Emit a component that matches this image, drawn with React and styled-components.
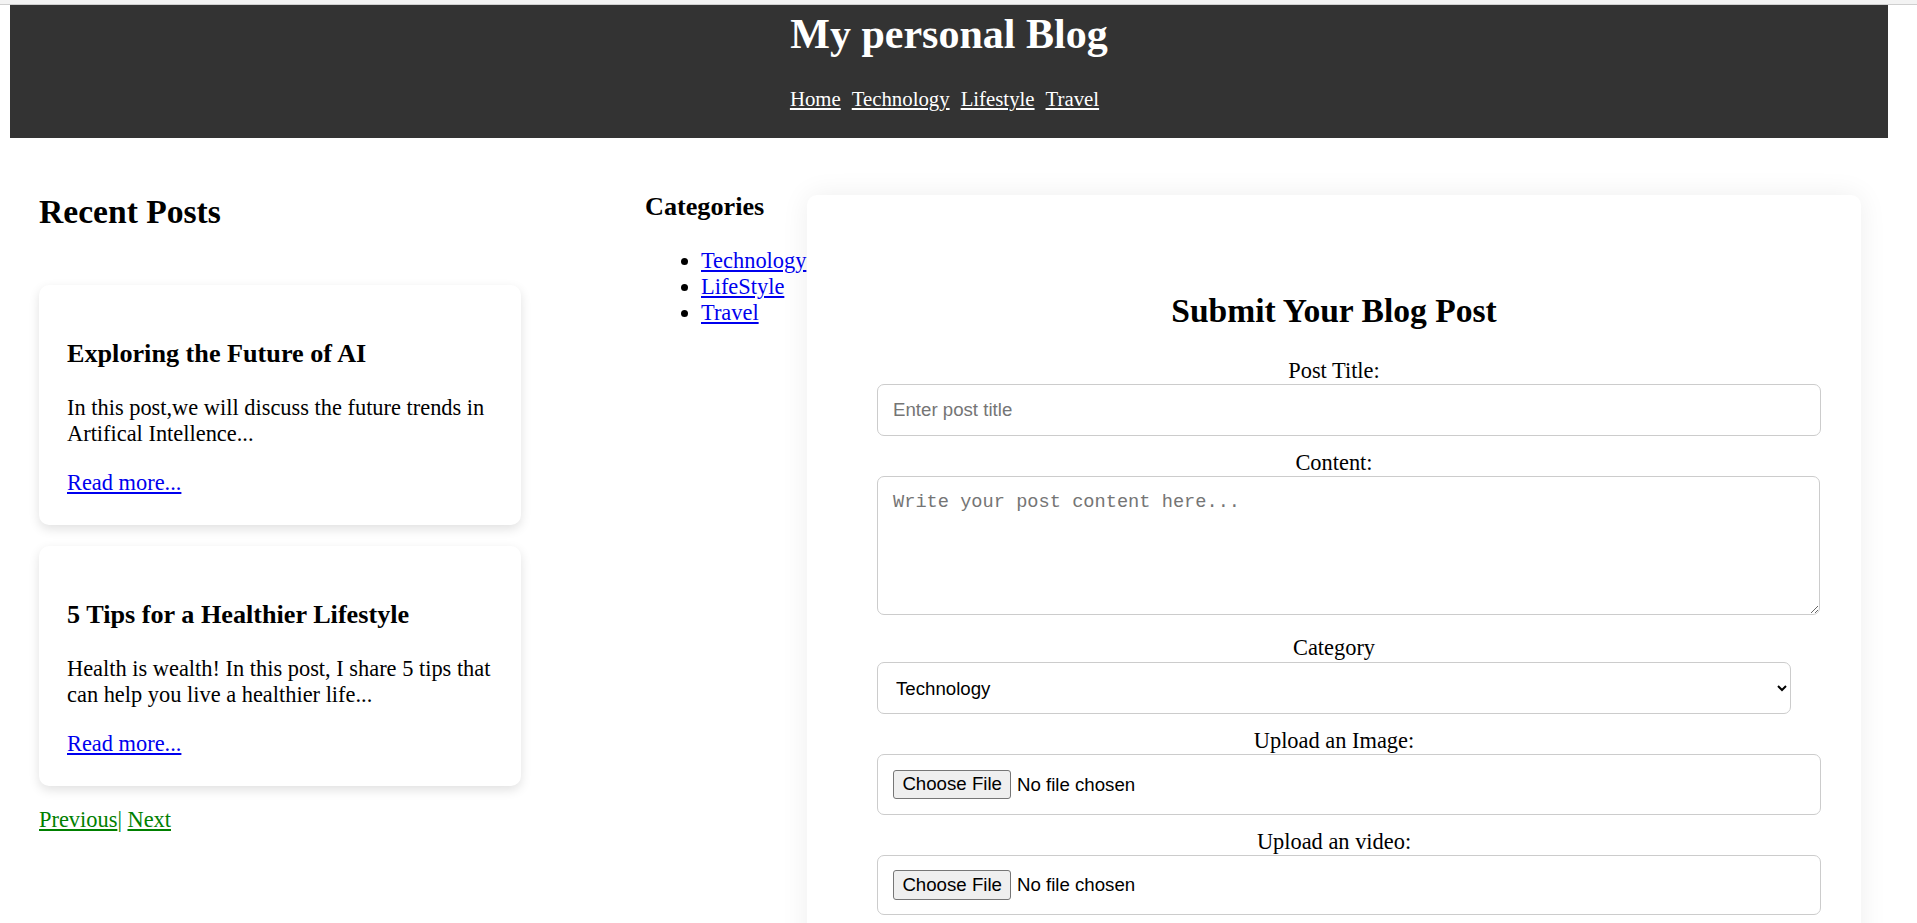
import React from 'react';
import styled, { createGlobalStyle } from 'styled-components';

const GlobalStyle = createGlobalStyle`
  html, body {
    margin: 0;
    padding: 0;
    background: #fff;
  }
  body {
    font-family: "Liberation Serif", "Times New Roman", serif;
    font-size: 22.4px;
    color: #000;
    border-top: 4px solid #f3f3f3;
  }
`;

/* right padding keeps room where the browser scrollbar sits in the reference */
const Page = styled.div`
  border-top: 1px solid #cfcfcf;
  padding: 0 29px 0 10px;
`;

const Header = styled.header`
  background-color: #333;
  color: #fff;
  text-align: center;
  padding-top: 5px;
`;

const Title = styled.h1`
  margin: 0;
  font-size: 42px;
  font-weight: bold;
`;

const Nav = styled.nav`
  margin: 0;
  padding: 28.5px 0 27.5px 2px;
  font-size: 20.8px;
`;

const NavLink = styled.a`
  color: #fff;
  text-decoration: underline;
  margin-right: 11px;
`;

const Main = styled.main`
  display: flex;
  align-items: flex-start;
  padding: 27px 27px 0 29px;
`;

const Posts = styled.section`
  width: 482px;
  flex-shrink: 0;
`;

const SectionTitle = styled.h2`
  font-size: 33.6px;
  margin: 28px 0;
`;

const CardList = styled.div`
  padding-top: 26px;
`;

const Card = styled.article`
  background: #fff;
  border-radius: 10px;
  padding: 28px 28px 29px;
  margin-bottom: 21px;
  box-shadow: 0 4px 11px rgba(0, 0, 0, 0.12);
`;

const CardTitle = styled.h3`
  font-size: 26.2px;
  margin: 26.2px 0;
`;

const CardText = styled.p`
  margin: 22.4px 0;
`;

const ReadMore = styled.a`
  color: #0000ee;
  text-decoration: underline;
`;

const Pagination = styled.div`
  color: #008000;
`;

const PageLink = styled.a`
  color: #008000;
  text-decoration: underline;
`;

const Sidebar = styled.aside`
  margin-left: 124px;
  width: 162px;
  flex-shrink: 0;
  white-space: nowrap;
`;

const SideTitle = styled.h3`
  font-size: 26.2px;
  margin: 27px 0 26.2px;
`;

const CategoryList = styled.ul`
  margin: 22.4px 0;
  padding-left: 56px;
`;

const CategoryLink = styled.a`
  color: #0000ee;
  text-decoration: underline;
`;

const FormCard = styled.section`
  flex: 1;
  position: relative;
  background: #fff;
  margin-top: 30px;
  padding: 70px 70px 40px;
  border-radius: 10px;
  box-shadow: 0 0 28px rgba(0, 0, 0, 0.07);
  text-align: center;
`;

const FormTitle = styled.h2`
  font-size: 33.6px;
  margin: 27px 0 28px;
`;

const Form = styled.form`
  display: block;
`;

const Label = styled.label`
  display: block;
`;

const fieldBase = `
  display: block;
  font-family: "Liberation Sans", Arial, sans-serif;
  font-size: 18.67px;
  border: 1px solid #ccc;
  border-radius: 7px;
  background: #fff;
  color: #000;
  margin: 0 0 14px;
  text-align: left;
  &::placeholder {
    color: #757575;
  }
`;

const TextInput = styled.input`
  ${fieldBase}
  width: 100%;
  padding: 14px 13px 14px 15px;
`;

const TextArea = styled.textarea`
  ${fieldBase}
  height: 139px;
  box-sizing: border-box;
  width: calc(100% + 29px);
  padding: 14px 15px;
  margin-bottom: 20px;
  font-family: "Liberation Mono", "Courier New", monospace;
`;

const Select = styled.select`
  ${fieldBase}
  width: 100%;
  height: 52px;
  padding: 0 14px;
  margin-top: 1px;
`;

const FileInput = styled.input`
  ${fieldBase}
  width: 100%;
  padding: 14.5px 13px 14.5px 15px;
  &::file-selector-button {
    font-family: "Liberation Sans", Arial, sans-serif;
    font-size: 18.67px;
    padding: 2.8px 8.4px;
    margin-right: 5.6px;
    border: 1px solid #767676;
    border-radius: 3px;
    background: #efefef;
    color: #000;
  }
`;

const posts = [
  {
    title: 'Exploring the Future of AI',
    text: 'In this post,we will discuss the future trends in Artifical Intellence...',
  },
  {
    title: '5 Tips for a Healthier Lifestyle',
    text: 'Health is wealth! In this post, I share 5 tips that can help you live a healthier life...',
  },
];

const App = () => (
  <>
    <GlobalStyle />
    <Page>
      <Header>
        <Title>My personal Blog</Title>
        <Nav>
          <NavLink href="#">Home</NavLink>
          <NavLink href="#">Technology</NavLink>
          <NavLink href="#">Lifestyle</NavLink>
          <NavLink href="#">Travel</NavLink>
        </Nav>
      </Header>
      <Main>
        <Posts>
          <SectionTitle>Recent Posts</SectionTitle>
          <CardList>
            {posts.map(post => (
              <Card key={post.title}>
                <CardTitle>{post.title}</CardTitle>
                <CardText>{post.text}</CardText>
                <ReadMore href="#">Read more...</ReadMore>
              </Card>
            ))}
          </CardList>
          <Pagination>
            <PageLink href="#">Previous</PageLink>| <PageLink href="#">Next</PageLink>
          </Pagination>
        </Posts>
        <Sidebar>
          <SideTitle>Categories</SideTitle>
          <CategoryList>
            <li><CategoryLink href="#">Technology</CategoryLink></li>
            <li><CategoryLink href="#">LifeStyle</CategoryLink></li>
            <li><CategoryLink href="#">Travel</CategoryLink></li>
          </CategoryList>
        </Sidebar>
        <FormCard>
          <FormTitle>Submit Your Blog Post</FormTitle>
          <Form onSubmit={e => e.preventDefault()}>
            <Label htmlFor="title">Post Title:</Label>
            <TextInput id="title" type="text" placeholder="Enter post title" />
            <Label htmlFor="content">Content:</Label>
            <TextArea id="content" placeholder="Write your post content here..." />
            <Label htmlFor="category">Category</Label>
            <Select id="category" defaultValue="technology">
              <option value="technology">Technology</option>
              <option value="lifestyle">Lifestyle</option>
              <option value="travel">Travel</option>
            </Select>
            <Label htmlFor="image">Upload an Image:</Label>
            <FileInput id="image" type="file" accept="image/*" />
            <Label htmlFor="video">Upload an video:</Label>
            <FileInput id="video" type="file" accept="video/*" />
          </Form>
        </FormCard>
      </Main>
    </Page>
  </>
);

export default App;
